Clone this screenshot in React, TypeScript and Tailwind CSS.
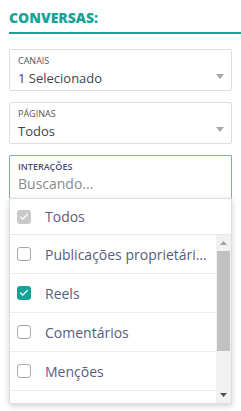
import { Check } from "lucide-react";

type Option = { label: string; checked?: boolean };

const options: Option[] = [
  { label: "Publicações proprietárias" },
  { label: "Reels", checked: true },
  { label: "Comentários" },
  { label: "Menções" },
  { label: "Mensagens diretas" },
];

function Caret() {
  return (
    <svg width="8" height="5" viewBox="0 0 8 5" className="shrink-0">
      <path d="M0 0h8L4 5z" fill="#a8a8a8" />
    </svg>
  );
}

function SelectBox({ label, value }: { label: string; value: string }) {
  return (
    <div className="flex h-[42px] items-start justify-between rounded-[2px] border border-[#dedede] pl-[8px] pr-[7px]">
      <div>
        <p className="pt-[5px] text-[9px] leading-[12px] text-[#555]">{label}</p>
        <p className="mt-[3px] text-[13px] leading-[17px] text-[#444]">{value}</p>
      </div>
      <div className="pt-[24px]">
        <Caret />
      </div>
    </div>
  );
}

function Box({ checked, disabled }: { checked?: boolean; disabled?: boolean }) {
  if (checked) {
    return (
      <span
        className={`flex h-[14px] w-[14px] shrink-0 items-center justify-center rounded-[3px] ${
          disabled ? "bg-[#c9c9c9]" : "bg-[#17a398]"
        }`}
      >
        <Check className="h-[10px] w-[10px] text-white" strokeWidth={3} />
      </span>
    );
  }
  return <span className="h-[14px] w-[14px] shrink-0 rounded-[3px] border border-[#a9a9a9] bg-white" />;
}

export default function App() {
  return (
    <div className="min-h-screen bg-white pl-[9px] font-['Open_Sans',sans-serif]">
      <h2 className="pt-[8px] text-[14px] font-extrabold leading-[19px] text-[#17a398]">CONVERSAS:</h2>
      <div className="mt-[5px] h-[2px] bg-[#17a398]" />

      <div className="mr-[9px] mt-[15px] flex flex-col gap-[11px]">
        <SelectBox label="CANAIS" value="1 Selecionado" />
        <SelectBox label="PÁGINAS" value="Todos" />

        <div className="relative">
          <div className="h-[43px] rounded-t-[2px] border border-b-0 border-[#7ea6dc] pl-[8px]">
            <p className="pt-[5px] text-[9px] font-semibold leading-[12px] text-[#4b5070]">INTERAÇÕES</p>
            <p className="mt-[2px] text-[14px] leading-[18px] text-[#8a8a8a]">Buscando...</p>
          </div>
          <div className="border border-[#dedede] bg-white shadow-[0_2px_6px_rgba(0,0,0,0.18)]">
            <div className="flex h-[36px] items-center gap-[14px] border-b border-[#e8e8e8] pl-[7px]">
              <Box checked disabled />
              <span className="text-[14px] text-[#5a5c7e]">Todos</span>
            </div>
            <div className="flex h-[168px] overflow-hidden">
              <div className="min-w-0 flex-1">
                {options.map((o) => (
                  <div
                    key={o.label}
                    className="flex h-[39px] items-center gap-[14px] border-b border-[#ededed] pl-[7px] pr-[9px]"
                  >
                    <Box checked={o.checked} />
                    <span className="truncate text-[14px] text-[#5a5c7e]">{o.label}</span>
                  </div>
                ))}
              </div>
              <div className="flex w-[15px] shrink-0 flex-col bg-[#f1f1f1]">
                <div className="flex h-[16px] items-center justify-center">
                  <svg width="7" height="4" viewBox="0 0 7 4">
                    <path d="M0 4h7L3.5 0z" fill="#a3a3a3" />
                  </svg>
                </div>
                <div className="mx-[1px] h-[100px] bg-[#c1c1c1]" />
                <div className="flex-1" />
                <div className="flex h-[16px] items-center justify-center">
                  <svg width="7" height="4" viewBox="0 0 7 4">
                    <path d="M0 0h7L3.5 4z" fill="#505050" />
                  </svg>
                </div>
              </div>
            </div>
          </div>
        </div>
      </div>
    </div>
  );
}
